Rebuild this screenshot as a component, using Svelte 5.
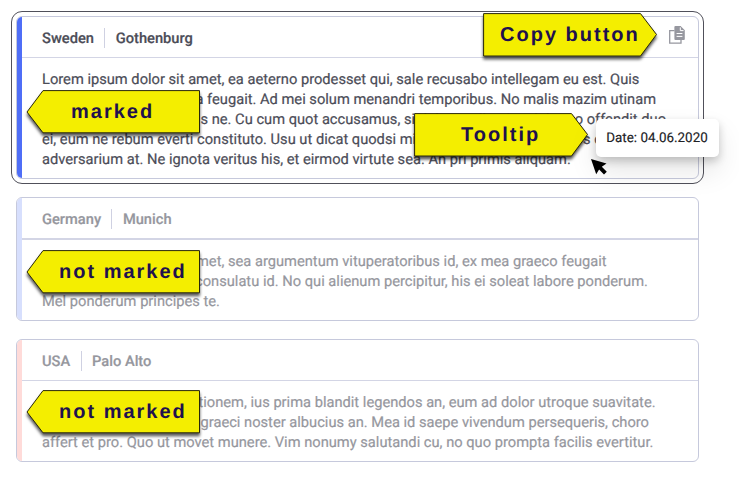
<script>
  // Each line is a list of [start offset in px, text] runs.
  const cards = [
    {
      country: 'Sweden', city: 'Gothenburg', tone: 'blue', active: true, head: 41,
      lines: [
        [[0, 'Lorem ipsum dolor sit amet, ea aeterno prodesset qui, sale recusabo intellegam eu est. Quis']],
        [[153.5, 'a feugait. Ad mei solum menandri temporibus. No malis mazim utinam']],
        [[158.5, 's ne. Cu cum quot accusamus, si dolor'], [429, 'albucius dolor no offendit duo']],
        [[0, 'ei, eum ne rebum everti constituto. Usu ut dicat quodsi mi'], [541, 's c']],
        [[0, 'adversarium at. Ne ignota veritus his, et eirmod virtute sea. An pri primis aliquam.']]
      ]
    },
    {
      country: 'Germany', city: 'Munich', tone: 'pale', active: false, head: 42,
      lines: [
        [[154, 'met, sea argumentum vituperatoribus id, ex mea graeco feugait']],
        [[153, 'consulatu id. No qui alienum percipitur, his ei soleat labore ponderum.']],
        [[0, 'Mel ponderum principes te.']]
      ]
    },
    {
      country: 'USA', city: 'Palo Alto', tone: 'pink', active: false, head: 41,
      lines: [
        [[156.5, 'tionem, ius prima blandit legendos an, eum ad dolor utroque suavitate.']],
        [[158.5, 'graeci noster albucius an. Mea id saepe vivendum persequeris, choro']],
        [[0, 'affert et pro. Quo ut movet munere. Vim nonumy salutandi cu, no quo prompta facilis evertitur.']]
      ]
    }
  ];
  const labels = [
    { text: 'marked', x: 26, y: 90, dir: 'left', pad: 45 },
    { text: 'not marked', x: 26, y: 250, dir: 'left', pad: 33 },
    { text: 'not marked', x: 26, y: 390, dir: 'left', pad: 33 },
    { text: 'Copy button', x: 483, y: 13, dir: 'right', pad: 17 },
    { text: 'Tooltip', x: 414, y: 113, dir: 'right', pad: 47 }
  ];
</script>

<main>
  {#each cards as c}
    <article class="card {c.tone}" class:active={c.active}>
      <div class="stripe"></div>
      <div class="content">
        <header style="height:{c.head}px">
          <strong>{c.country}</strong><i></i><strong>{c.city}</strong>
          {#if c.active}
            <svg class="copy" width="16" height="18" viewBox="0 0 16 18">
              <path d="M5.5 4.6H.7V17.2H12V13.5" fill="none" stroke="#96979f" stroke-width="1.3" />
              <path d="M6.4 0H11.6L15.8 4.2V13a1 1 0 0 1-1 1H6.4a1 1 0 0 1-1-1V1a1 1 0 0 1 1-1Z" fill="#96979f" />
              <path d="M11.3 1.4v3.2h3.2M7.6 7.5h5.8M7.6 10.4h5.8" fill="none" stroke="#fff" stroke-width="1" />
            </svg>
          {/if}
        </header>
        <div class="body">
          {#each c.lines as line}
            <div class="line">
              {#each line as [x, text]}<span style="margin-left:{x}px">{text}</span>{/each}
            </div>
          {/each}
        </div>
      </div>
    </article>
  {/each}

  {#each labels as l}
    <div class="label" style="left:{l.x}px;top:{l.y}px;padding-left:{l.pad}px">
      <svg width="175" height="44" viewBox="0 0 175 44">
        <path d={l.dir === 'left' ? 'M17 .6H173.5V42.8H17L1 22Z' : 'M.6 .6H157.5L173.5 21.5L157.5 43H.6Z'} fill="#f4ee00" stroke="#29270a" />
      </svg>
      <b>{l.text}</b>
    </div>
  {/each}

  <div class="tooltip">Date: 04.06.2020</div>
  <svg class="cursor" width="17" height="17" viewBox="0 0 17 17">
    <path d="M0 0L15.5 4.5L10.8 7.8L15.8 12.8L13 15.5L8.1 10.6L5.2 15.3Z" fill="#000" />
  </svg>
</main>

<style>
  :global(body) { margin: 0; background: #fff; }
  main {
    position: relative; box-sizing: border-box; width: 739px; height: 478px; overflow: hidden;
    padding: 16px 0 0 16px; font: 14.68px/20px Roboto, sans-serif; text-rendering: geometricPrecision;
  }
  .card {
    display: flex; box-sizing: border-box; width: 683px; height: 124px; margin-bottom: 18px;
    border: 1px solid #c6c9dc; border-radius: 6px; color: #96979e; position: relative;
    -webkit-text-stroke: .2px currentColor;
  }
  .card.active { height: 163px; color: #4c4d58; }
  .card.active::after {
    content: ''; position: absolute; inset: -6px; border: 1px solid #50505a; border-radius: 11px;
  }
  .card:last-of-type { height: 123px; }
  .stripe { width: 5px; border-radius: 5px 0 0 5px; background: #4f6ef7; }
  .pale .stripe { background: #d7dffd; }
  .pink .stripe { background: #ffdbd9; }
  .content { flex: 1; }
  header {
    display: flex; align-items: center; box-sizing: border-box; padding: 2px 13px 0 20px;
    border-bottom: 1px solid #d3d5e5;
  }
  .pale header { border-bottom-width: 2px; }
  header strong { font-weight: 500; }
  header i { width: 1px; height: 20px; margin: 0 10.4px; background: #cfd1e2; }
  .copy { margin: -6px 0 0 auto; }
  .body { padding: 11px 0 0 20px; }
  .line { display: grid; height: 20px; white-space: pre; }
  .line span { grid-area: 1 / 1; }
  .label {
    position: absolute; box-sizing: border-box; width: 175px; height: 44px;
    font: bold 20px/45px "Liberation Sans", Arial, sans-serif; letter-spacing: 2px; color: #20104e; white-space: nowrap;
  }
  .label svg { position: absolute; left: 0; top: 0; overflow: visible; filter: drop-shadow(0 3px 1.5px rgba(0, 0, 0, .65)); }
  .label b { position: relative; }
  .tooltip {
    position: absolute; left: 596px; top: 119px; width: 123px; height: 38px; border-radius: 5px;
    background: #fff; color: #202125; font-size: 13.4px; line-height: 40px; text-align: center; text-indent: -1px;
    box-shadow: 0 4px 8px rgba(0, 0, 0, .2), 0 14px 28px rgba(0, 0, 0, .1);
    -webkit-text-stroke: .15px currentColor;
  }
  .cursor { position: absolute; left: 591px; top: 159px; }
</style>
